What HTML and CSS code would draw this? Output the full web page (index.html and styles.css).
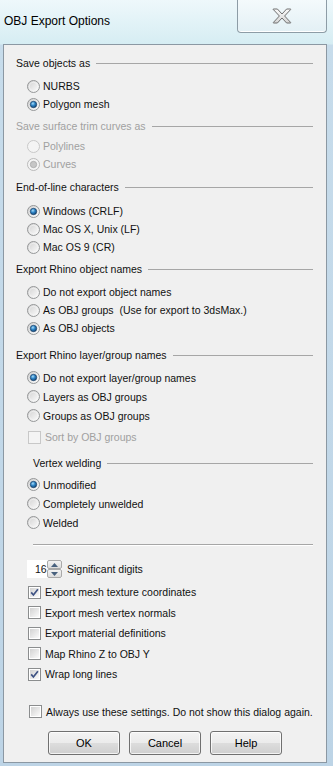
FILE: index.html
```html
<!DOCTYPE html>
<html lang="en">
<head>
<meta charset="UTF-8">
<title>OBJ Export Options</title>
<link rel="stylesheet" href="styles.css">
</head>
<body>
<svg class="defs" aria-hidden="true">
  <defs>
    <linearGradient id="ringFill" x1="0" y1="0" x2="1" y2="1">
      <stop offset="0" stop-color="#cfcfcf"/>
      <stop offset="1" stop-color="#ffffff"/>
    </linearGradient>
    <radialGradient id="dotFill" cx="40%" cy="35%" r="70%">
      <stop offset="0" stop-color="#a9ddf9"/>
      <stop offset="0.45" stop-color="#2f86c8"/>
      <stop offset="1" stop-color="#0f3f6e"/>
    </radialGradient>
    <linearGradient id="boxFill" x1="0" y1="0" x2="1" y2="1">
      <stop offset="0" stop-color="#d2d2d2"/>
      <stop offset="1" stop-color="#fbfbfb"/>
    </linearGradient>
    <linearGradient id="xFill" x1="0" y1="0" x2="0" y2="1">
      <stop offset="0" stop-color="#fbfbfb"/>
      <stop offset="1" stop-color="#d4d4d4"/>
    </linearGradient>
    <symbol id="radio" viewBox="0 0 13 13">
      <circle cx="6.5" cy="6.5" r="6" fill="url(#ringFill)" stroke="#959798"/>
      <circle cx="6.5" cy="6.5" r="4.2" fill="none" stroke="#f6f6f6" stroke-width=".6"/>
    </symbol>
    <symbol id="radio-on" viewBox="0 0 13 13">
      <circle cx="6.5" cy="6.5" r="6" fill="url(#ringFill)" stroke="#959798"/>
      <circle cx="6.5" cy="6.5" r="3.2" fill="url(#dotFill)" stroke="#1a3f66" stroke-width=".7"/>
    </symbol>
    <symbol id="radio-off-dis" viewBox="0 0 13 13">
      <circle cx="6.5" cy="6.5" r="6" fill="#f4f4f4" stroke="#c8c8c8"/>
    </symbol>
    <symbol id="radio-on-dis" viewBox="0 0 13 13">
      <circle cx="6.5" cy="6.5" r="6" fill="#f4f4f4" stroke="#b9b9b9"/>
      <circle cx="6.5" cy="6.5" r="3.2" fill="#c6c6c6" stroke="#a3a3a3" stroke-width=".7"/>
    </symbol>
    <symbol id="check" viewBox="0 0 13 13">
      <rect x=".5" y=".5" width="12" height="12" fill="#fff" stroke="#8b8d8e"/>
      <rect x="2" y="2" width="9" height="9" fill="url(#boxFill)"/>
    </symbol>
    <symbol id="check-on" viewBox="0 0 13 13">
      <rect x=".5" y=".5" width="12" height="12" fill="#fff" stroke="#8b8d8e"/>
      <rect x="2" y="2" width="9" height="9" fill="url(#boxFill)"/>
      <path d="M3.2 6.4 L5.4 9 L9.9 3.2" fill="none" stroke="#3f5384" stroke-width="1.7"/>
    </symbol>
    <symbol id="check-dis" viewBox="0 0 13 13">
      <rect x=".5" y=".5" width="12" height="12" fill="#f4f4f4" stroke="#c8c8c8"/>
    </symbol>
  </defs>
</svg>

<div class="window">
  <header class="titlebar">
    <span class="title">OBJ Export Options</span>
    <button class="close" aria-label="Close">
      <svg width="20" height="16" viewBox="0 0 20 16">
        <path d="M1 1.5 Q1 1 1.6 1 H5.4 L10 6 L14.6 1 H18.4 Q19 1 18.6 1.6 L12.6 8 L18.6 14.4 Q19 15 18.4 15 H14.6 L10 10 L5.4 15 H1.6 Q1 15 1.4 14.4 L7.4 8 L1.4 1.6 Z" fill="url(#xFill)" stroke="#6f6f6f" stroke-width="1" stroke-linejoin="round"/>
      </svg>
    </button>
  </header>

  <main class="client">
    <section class="group">
      <div class="group-head"><span>Save objects as</span></div>
      <div class="options">
        <label class="opt"><svg class="ctl"><use href="#radio"/></svg>NURBS</label>
        <label class="opt"><svg class="ctl"><use href="#radio-on"/></svg>Polygon mesh</label>
      </div>
    </section>

    <section class="group group-2 disabled">
      <div class="group-head"><span>Save surface trim curves as</span></div>
      <div class="options">
        <label class="opt"><svg class="ctl"><use href="#radio-off-dis"/></svg>Polylines</label>
        <label class="opt"><svg class="ctl"><use href="#radio-on-dis"/></svg>Curves</label>
      </div>
    </section>

    <section class="group group-3">
      <div class="group-head"><span>End-of-line characters</span></div>
      <div class="options">
        <label class="opt"><svg class="ctl"><use href="#radio-on"/></svg>Windows (CRLF)</label>
        <label class="opt"><svg class="ctl"><use href="#radio"/></svg>Mac OS X, Unix (LF)</label>
        <label class="opt"><svg class="ctl"><use href="#radio"/></svg>Mac OS 9 (CR)</label>
      </div>
    </section>

    <section class="group">
      <div class="group-head"><span>Export Rhino object names</span></div>
      <div class="options">
        <label class="opt"><svg class="ctl"><use href="#radio"/></svg>Do not export object names</label>
        <label class="opt"><svg class="ctl"><use href="#radio"/></svg>As OBJ groups&nbsp; (Use for export to 3dsMax.)</label>
        <label class="opt"><svg class="ctl"><use href="#radio-on"/></svg>As OBJ objects</label>
      </div>
    </section>

    <section class="group group-5">
      <div class="group-head"><span>Export Rhino layer/group names</span></div>
      <div class="options tall">
        <label class="opt"><svg class="ctl"><use href="#radio-on"/></svg>Do not export layer/group names</label>
        <label class="opt"><svg class="ctl"><use href="#radio"/></svg>Layers as OBJ groups</label>
        <label class="opt"><svg class="ctl"><use href="#radio"/></svg>Groups as OBJ groups</label>
        <label class="opt box disabled sort"><svg class="ctl"><use href="#check-dis"/></svg>Sort by OBJ groups</label>
      </div>
    </section>

    <section class="group group-weld">
      <div class="group-head inset"><span>Vertex welding</span></div>
      <div class="options tall">
        <label class="opt"><svg class="ctl"><use href="#radio-on"/></svg>Unmodified</label>
        <label class="opt"><svg class="ctl"><use href="#radio"/></svg>Completely unwelded</label>
        <label class="opt"><svg class="ctl"><use href="#radio"/></svg>Welded</label>
      </div>
    </section>

    <hr class="sep">

    <div class="digits">
      <div class="spin">
        <span class="spin-val">16</span>
        <span class="spin-btns">
          <span class="spin-btn"><svg width="7" height="4" viewBox="0 0 7 4"><path d="M0 4 L3.5 0 L7 4Z" fill="#48617e"/></svg></span>
          <span class="spin-btn"><svg width="7" height="4" viewBox="0 0 7 4"><path d="M0 0 L3.5 4 L7 0Z" fill="#48617e"/></svg></span>
        </span>
      </div>
      <span>Significant digits</span>
    </div>

    <div class="checks">
      <label class="opt box"><svg class="ctl"><use href="#check-on"/></svg>Export mesh texture coordinates</label>
      <label class="opt box"><svg class="ctl"><use href="#check"/></svg>Export mesh vertex normals</label>
      <label class="opt box"><svg class="ctl"><use href="#check"/></svg>Export material definitions</label>
      <label class="opt box"><svg class="ctl"><use href="#check"/></svg>Map Rhino Z to OBJ Y</label>
      <label class="opt box"><svg class="ctl"><use href="#check-on"/></svg>Wrap long lines</label>
    </div>

    <label class="opt box always"><svg class="ctl"><use href="#check"/></svg>Always use these settings. Do not show this dialog again.</label>

    <div class="buttons">
      <button class="btn">OK</button>
      <button class="btn">Cancel</button>
      <button class="btn">Help</button>
    </div>
  </main>
</div>
</body>
</html>
```

FILE: styles.css
```css
body{
  margin: 0;
  background: #c3d9e8;
  font-family: "Liberation Sans", Arial, sans-serif;
  font-size: 10.5px;
  color: #111;
}
*, *:before, *:after{
  box-sizing: border-box;
}
.defs{
  position: absolute;
  width: 0;
  height: 0;
}
.window{
  width: 333px;
  height: 766px;
  display: flex;
  flex-direction: column;
  background: linear-gradient(180deg, #eef8fb 0, #d6edf3 44px, #c7dceb 45px, #bdd4e6 100%);
}

/* title bar */
.titlebar{
  height: 44px;
  display: flex;
  justify-content: space-between;
  align-items: flex-start;
  padding: 0 6px 0 4px;
}
.title{
  margin-top: 14px;
  font-size: 12px;
  line-height: 14px;
  color: #000;
}
.close{
  width: 90px;
  height: 33px;
  padding: 0;
  display: flex;
  align-items: center;
  justify-content: center;
  background: linear-gradient(180deg, #f4fafc, #e3f0f5);
  border: 1px solid #8d9ca6;
  border-top: none;
  border-radius: 0 0 4px 4px;
  box-shadow: inset 0 -1px 0 #fff;
}

/* client area */
.client{
  height: 719px;
  margin: 0 6px 0 3px;
  padding: 11px 10px 0 12px;
  background: #f0f0f0;
  border: 1px solid #8b98a3;
  display: flex;
  flex-direction: column;
}
.group + .group{
  margin-top: 6px;
}
.group.group-3{
  margin-top: 7px;
}
.group.group-5{
  margin-top: 11px;
}
.group.group-weld{
  margin-top: 10px;
}
.group-head{
  height: 14px;
  display: flex;
  align-items: center;
  gap: 6px;
  line-height: 14px;
  white-space: nowrap;
}
.group-head:after{
  content: '';
  flex: 1;
  height: 0;
  border-top: 1px solid #a6a6a6;
  margin-right: 3px;
}
.group-head.inset{
  padding-left: 17px;
}
.options{
  margin-top: 7px;
  padding-left: 11px;
  display: flex;
  flex-direction: column;
}
.group-2 .options{
  margin-top: 4px;
}
.group-3 .options{
  margin-top: 8px;
}
.options.tall{
  margin-top: 6px;
}
.group-weld .options{
  margin-top: 5px;
}
.opt{
  height: 18px;
  display: flex;
  align-items: center;
  gap: 3px;
  white-space: nowrap;
}
.options.tall .opt{
  height: 19px;
}
.options.tall .opt.sort{
  height: 18px;
  margin-top: 3px;
}
.ctl{
  width: 13px;
  height: 13px;
  flex-shrink: 0;
}
.opt.box{
  gap: 4px;
}
.opt.box .ctl{
  margin-left: 1px;
}
.disabled{
  color: #a0a0a0;
}

.sep{
  margin: 12px 3px 0 17px;
  height: 2px;
  border: none;
  border-top: 1px solid #a6a6a6;
  border-bottom: 1px solid #fff;
}

/* spinner */
.digits{
  margin-top: 14px;
  padding-left: 11px;
  height: 18px;
  display: flex;
  align-items: center;
  gap: 5px;
}
.spin{
  width: 35px;
  height: 18px;
  background: #fff;
  display: flex;
  align-items: center;
  justify-content: space-between;
}
.spin-val{
  padding-left: 8px;
}
.spin-btns{
  width: 15px;
  height: 18px;
  display: flex;
  flex-direction: column;
}
.spin-btn{
  flex: 1;
  display: flex;
  align-items: center;
  justify-content: center;
  background: linear-gradient(180deg, #f3f3f3, #dcdcdc);
  border: 1px solid #a9a9a9;
  border-radius: 2px;
}

.checks{
  margin-top: 4px;
  padding-left: 11px;
  display: flex;
  flex-direction: column;
}
.checks .opt{
  height: 20.5px;
}
.opt.always{
  margin-top: 20px;
  padding-left: 12px;
  height: 14px;
}

/* buttons */
.buttons{
  margin-top: 12px;
  padding-left: 32px;
  display: flex;
  gap: 9px;
}
.btn{
  width: 72px;
  height: 24px;
  padding: 0;
  font: inherit;
  font-size: 11px;
  color: #000;
  border: 1px solid #707070;
  border-radius: 3px;
  background: linear-gradient(180deg, #f3f3f3 0, #ebebeb 50%, #dddddd 50%, #cfcfcf 100%);
  box-shadow: inset 0 0 0 1px rgba(255, 255, 255, 0.75);
}
```
